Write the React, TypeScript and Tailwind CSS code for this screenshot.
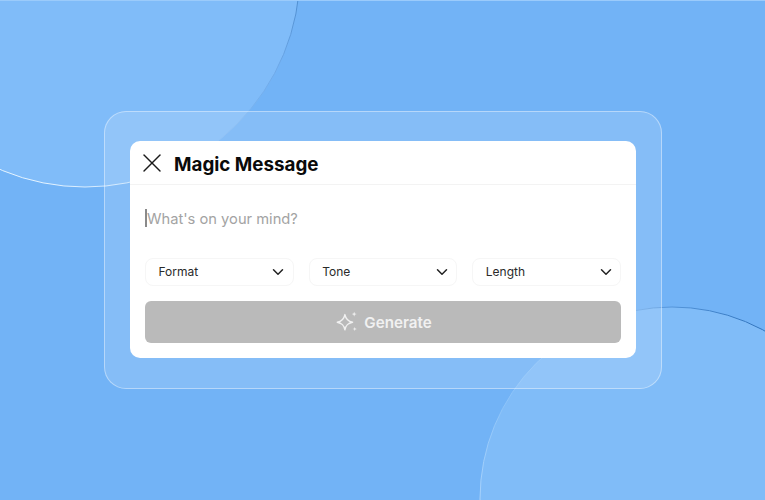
import { ChevronDown, X } from "lucide-react";

const selects = ["Format", "Tone", "Length"];

function Backdrop() {
  return (
    <svg className="absolute inset-0 h-full w-full" viewBox="0 0 765 500" aria-hidden="true">
      <defs>
        <linearGradient id="edgeTop" gradientUnits="userSpaceOnUse" x1="60" y1="200" x2="298" y2="0">
          <stop offset="0" stopColor="#e4f3ff" />
          <stop offset="0.25" stopColor="#c5e2fd" />
          <stop offset="0.45" stopColor="#86bff8" />
          <stop offset="0.8" stopColor="#6fa9e8" />
          <stop offset="1" stopColor="#4f8ed0" />
        </linearGradient>
        <linearGradient id="edgeBottom" gradientUnits="userSpaceOnUse" x1="765" y1="330" x2="480" y2="500">
          <stop offset="0" stopColor="#2f72bb" />
          <stop offset="0.25" stopColor="#5c9ce0" />
          <stop offset="0.4" stopColor="#86bff8" />
          <stop offset="0.8" stopColor="#8ec4f9" />
          <stop offset="1" stopColor="#a8d2fb" />
        </linearGradient>
      </defs>
      <circle cx="85" cy="-28" r="215" fill="#80bcf9" stroke="url(#edgeTop)" strokeWidth="1" />
      <circle cx="672" cy="499" r="192" fill="#80bcf8" stroke="url(#edgeBottom)" strokeWidth="1" />
      <rect x="0" y="0" width="765" height="1" fill="#9bcbfb" />
    </svg>
  );
}

function Sparkle() {
  return (
    <svg width="24" height="24" viewBox="0 0 22 22" fill="none" className="text-[#f1f1f1]">
      <path
        d="M10 4.2C10.9 8.6 12.6 10.4 17 11.2C12.6 12.1 10.9 13.8 10 18.2C9.1 13.8 7.4 12.1 3 11.2C7.4 10.4 9.1 8.6 10 4.2Z"
        stroke="currentColor"
        strokeWidth="1.3"
        strokeLinejoin="round"
      />
      <path d="M18.5 1.5l.6 1.6 1.6.6-1.6.6-.6 1.6-.6-1.6-1.6-.6 1.6-.6z" fill="currentColor" />
      <path d="M19 15.5l.5 1.4 1.4.5-1.4.5-.5 1.4-.5-1.4-1.4-.5 1.4-.5z" fill="currentColor" />
    </svg>
  );
}

export default function App() {
  return (
    <div className="relative flex h-[500px] w-full items-center justify-center overflow-hidden bg-[#72b3f6] font-['Inter',sans-serif]">
      <Backdrop />
      <div className="relative ml-[1px] rounded-[22px] border border-white/40 bg-white/[0.14] px-[25px] pb-[30px] pt-[29px]">
        <div className="w-[506px] rounded-[10px] bg-white">
          <div className="flex h-[44px] items-center gap-[6px] border-b border-[#f3f3f3] pl-[6px]">
            <X className="mt-[1px] h-[32px] w-[32px] text-[#1a1a1a]" strokeWidth={1.05} />
            <h1 className="pt-[5px] text-[18.8px] font-[650] leading-none text-[#0a0a0a]">Magic Message</h1>
          </div>
          <div className="px-[15px] pb-[15px]">
            <div className="flex h-[73px] items-start pt-[24px]">
              <span className="h-[18px] w-[2px] bg-[#8a8a8a]" />
              <span className="pt-[1px] text-[14.7px] leading-[18px] text-[#a3a3a3]">What's on your mind?</span>
            </div>
            <div className="grid grid-cols-3 gap-[15px]">
              {selects.map((label) => (
                <div
                  key={label}
                  className="flex h-[28px] items-center justify-between rounded-[8px] border border-[#f6f6f6] pl-[12.5px] pr-[5.5px]"
                >
                  <span className="text-[12px] text-[#2a2a2a]">{label}</span>
                  <ChevronDown className="h-[18px] w-[18px] text-[#222222]" strokeWidth={2} />
                </div>
              ))}
            </div>
            <button className="mt-[15px] flex h-[42px] w-full items-center justify-center gap-[6px] rounded-[6px] bg-[#bababa] text-[15.2px] font-semibold text-[#f1f1f1]">
              <Sparkle />
              <span className="pt-[2px]">Generate</span>
            </button>
          </div>
        </div>
      </div>
    </div>
  );
}
